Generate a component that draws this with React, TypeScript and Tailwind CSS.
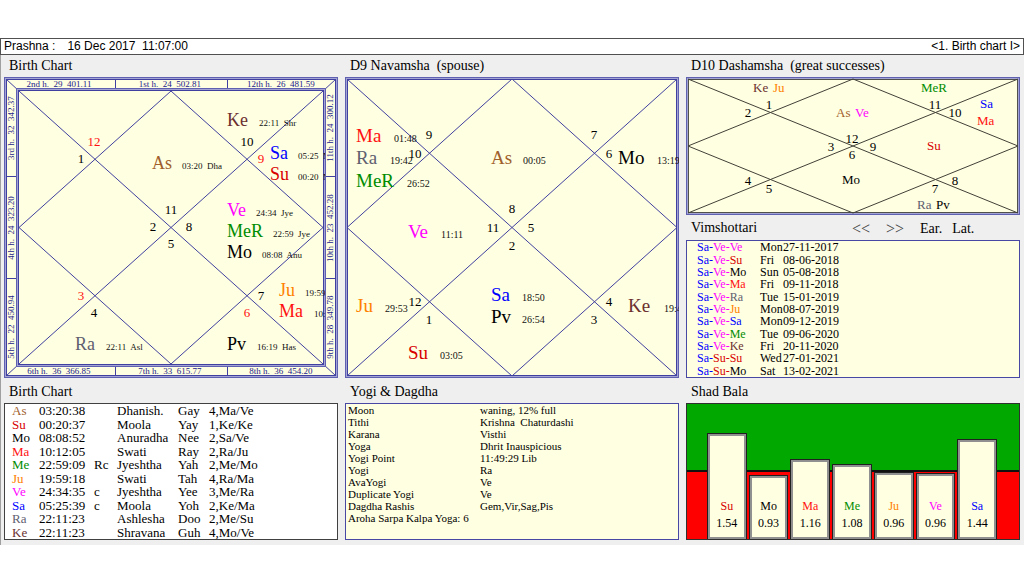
import type { ReactNode } from "react";

const SERIF = "font-['Liberation_Serif',serif]";

const COLORS: Record<string, string> = {
  As: "#a0602c",
  Su: "#d80000",
  Mo: "#000000",
  Ma: "#ff1010",
  Me: "#008c00",
  MeR: "#008c00",
  Ju: "#ff8000",
  Ve: "#ff00ff",
  Sa: "#0000ff",
  Ra: "#606070",
  Ke: "#6b3030",
  Pv: "#000000",
};

const NAVY = "#4040a0";
const CREAM = "#ffffe1";

type Label = { x: number; y: number; t: string; c?: string };
type Body = { x: number; y: number; p: string; dx?: number; note?: string };

function Numbers({ items }: { items: Label[] }) {
  return (
    <g fontSize={13} textAnchor="middle">
      {items.map((n) => (
        <text key={n.t} x={n.x} y={n.y} fill={n.c ?? "#000"}>
          {n.t}
        </text>
      ))}
    </g>
  );
}

function Bodies({ items, size, noteSize }: { items: Body[]; size: number; noteSize: number }) {
  return (
    <g>
      {items.map((b) => (
        <g key={b.p}>
          <text x={b.x} y={b.y} fontSize={size} fill={COLORS[b.p]}>
            {b.p}
          </text>
          {b.note && (
            <text x={b.dx} y={b.y} fontSize={noteSize} fill="#111" className="whitespace-pre">
              {b.note}
            </text>
          )}
        </g>
      ))}
    </g>
  );
}

function Lattice({ x, y, w, h, color }: { x: number; y: number; w: number; h: number; color: string }) {
  const mx = x + w / 2;
  const my = y + h / 2;
  return (
    <path
      d={`M${x} ${y}L${x + w} ${y + h}M${x + w} ${y}L${x} ${y + h}M${mx} ${y}L${x + w} ${my}L${mx} ${y + h}L${x} ${my}Z`}
      fill="none"
      stroke={color}
      strokeWidth={1}
    />
  );
}

function Frame({ x, y, w, h, inner = NAVY }: { x: number; y: number; w: number; h: number; inner?: string }) {
  return (
    <g fill="none">
      <rect x={x + 1} y={y + 1} width={w - 2} height={h - 2} stroke="#a4a4d4" strokeWidth={2} />
      <rect x={x + 0.5} y={y + 0.5} width={w - 1} height={h - 1} stroke="#6060b0" />
      <rect x={x + 2.5} y={y + 2.5} width={w - 5} height={h - 5} stroke={inner} />
    </g>
  );
}

const BIRTH_NUMBERS: Label[] = [
  { x: 90, y: 69, t: "12", c: "#ff1010" },
  { x: 77, y: 86, t: "1" },
  { x: 243, y: 69, t: "10" },
  { x: 257, y: 86, t: "9", c: "#ff1010" },
  { x: 167, y: 137, t: "11" },
  { x: 149, y: 154, t: "2" },
  { x: 185, y: 154, t: "8" },
  { x: 167, y: 171, t: "5" },
  { x: 77, y: 223, t: "3", c: "#ff1010" },
  { x: 90, y: 240, t: "4" },
  { x: 257, y: 223, t: "7" },
  { x: 243, y: 240, t: "6", c: "#ff1010" },
];

const BIRTH_BODIES: Body[] = [
  { x: 223, y: 49, p: "Ke", dx: 255, note: "22:11  Shr" },
  { x: 148, y: 92, p: "As", dx: 178, note: "03:20  Dha" },
  { x: 266, y: 82, p: "Sa", dx: 294, note: "05:25  M" },
  { x: 266, y: 103, p: "Su", dx: 294, note: "00:20  M" },
  { x: 223, y: 139, p: "Ve", dx: 252, note: "24:34  Jye" },
  { x: 223, y: 160, p: "MeR", dx: 269, note: "22:59  Jye" },
  { x: 223, y: 181, p: "Mo", dx: 258, note: "08:08  Anu" },
  { x: 275, y: 219, p: "Ju", dx: 301, note: "19:59" },
  { x: 275, y: 240, p: "Ma", dx: 310, note: "10:" },
  { x: 71, y: 273, p: "Ra", dx: 102, note: "22:11  Asl" },
  { x: 223, y: 273, p: "Pv", dx: 253, note: "16:19  Has" },
];

const HOUSES: { x: number; y: number; t: string; r?: boolean }[] = [
  { x: 55, y: 10, t: "2nd h.  29  401.11" },
  { x: 166, y: 10, t: "1st h.  24  502.81" },
  { x: 277, y: 10, t: "12th h.  26  481.59" },
  { x: 55, y: 297, t: "6th h.  36  366.85" },
  { x: 166, y: 297, t: "7th h.  33  615.77" },
  { x: 277, y: 297, t: "8th h.  36  454.20" },
  { x: 10, y: 51, t: "3rd h.  32  342.37", r: true },
  { x: 10, y: 151, t: "4th h.  24  323.20", r: true },
  { x: 10, y: 250, t: "5th h.  22  450.94", r: true },
  { x: 329, y: 51, t: "11th h.  24  300.12", r: true },
  { x: 329, y: 151, t: "10th h.  23  452.28", r: true },
  { x: 329, y: 250, t: "9th h.  28  349.78", r: true },
];

function BirthChart() {
  return (
    <svg viewBox="0 0 334 301" className="block h-auto w-full" role="img" aria-label="Birth Chart">
      <defs>
        <clipPath id="birth-inner">
          <rect x="14" y="13" width="307" height="275" />
        </clipPath>
      </defs>
      <rect width="334" height="301" fill={CREAM} />
      <path d="M2 2L15 14M332 2L319 14M2 299L15 287M332 299L319 287" stroke={NAVY} fill="none" />
      <path
        d="M111.5 2V13M223.5 2V13M111.5 288V299M223.5 288V299M2 99.5H13M2 201.5H13M321 99.5H332M321 201.5H332"
        stroke={NAVY}
        fill="none"
      />
      <Frame x={0} y={0} w={334} h={301} />
      <Frame x={12} y={11} w={310} h={279} />
      <Lattice x={15} y={14} w={304} h={273} color={NAVY} />
      <g fontSize={9} textAnchor="middle" fill="#22228c">
        {HOUSES.map((h) => (
          <text
            key={h.t}
            x={h.x}
            y={h.y}
            className="whitespace-pre"
            transform={h.r ? `rotate(-90 ${h.x} ${h.y})` : undefined}
          >
            {h.t}
          </text>
        ))}
      </g>
      <Numbers items={BIRTH_NUMBERS} />
      <g clipPath="url(#birth-inner)">
        <Bodies items={BIRTH_BODIES} size={18} noteSize={9} />
      </g>
    </svg>
  );
}

const NAVAMSHA_NUMBERS: Label[] = [
  { x: 84, y: 62, t: "9" },
  { x: 70, y: 81, t: "10" },
  { x: 249, y: 62, t: "7" },
  { x: 264, y: 81, t: "6" },
  { x: 167, y: 136, t: "8" },
  { x: 148, y: 155, t: "11" },
  { x: 186, y: 155, t: "5" },
  { x: 167, y: 173, t: "2" },
  { x: 70, y: 229, t: "12" },
  { x: 84, y: 247, t: "1" },
  { x: 264, y: 229, t: "4" },
  { x: 249, y: 247, t: "3" },
];

const NAVAMSHA_BODIES: Body[] = [
  { x: 11, y: 65, p: "Ma", dx: 49, note: "01:48" },
  { x: 11, y: 87, p: "Ra", dx: 45, note: "19:42" },
  { x: 11, y: 110, p: "MeR", dx: 62, note: "26:52" },
  { x: 146, y: 87, p: "As", dx: 178, note: "00:05" },
  { x: 273, y: 87, p: "Mo", dx: 312, note: "13:19" },
  { x: 63, y: 161, p: "Ve", dx: 96, note: "11:11" },
  { x: 146, y: 224, p: "Sa", dx: 177, note: "18:50" },
  { x: 146, y: 246, p: "Pv", dx: 177, note: "26:54" },
  { x: 11, y: 235, p: "Ju", dx: 40, note: "29:53" },
  { x: 283, y: 235, p: "Ke", dx: 319, note: "19:4" },
  { x: 63, y: 282, p: "Su", dx: 95, note: "03:05" },
];

function NavamshaChart() {
  return (
    <svg viewBox="0 0 334 301" className="block h-auto w-full" role="img" aria-label="D9 Navamsha">
      <rect width="334" height="301" fill={CREAM} />
      <Frame x={0} y={0} w={334} h={301} />
      <Lattice x={2} y={2} w={330} h={297} color={NAVY} />
      <Numbers items={NAVAMSHA_NUMBERS} />
      <Bodies items={NAVAMSHA_BODIES} size={19} noteSize={10} />
    </svg>
  );
}

const DASHAMSHA_NUMBERS: Label[] = [
  { x: 83, y: 32, t: "1" },
  { x: 62, y: 40, t: "2" },
  { x: 249, y: 32, t: "11" },
  { x: 269, y: 40, t: "10" },
  { x: 166, y: 66, t: "12" },
  { x: 145, y: 74, t: "3" },
  { x: 187, y: 74, t: "9" },
  { x: 166, y: 82, t: "6" },
  { x: 62, y: 108, t: "4" },
  { x: 83, y: 116, t: "5" },
  { x: 269, y: 108, t: "8" },
  { x: 249, y: 116, t: "7" },
];

const DASHAMSHA_BODIES: Body[] = [
  { x: 67, y: 15, p: "Ke" },
  { x: 87, y: 15, p: "Ju" },
  { x: 150, y: 40, p: "As" },
  { x: 169, y: 40, p: "Ve" },
  { x: 235, y: 15, p: "MeR" },
  { x: 294, y: 31, p: "Sa" },
  { x: 291, y: 48, p: "Ma" },
  { x: 241, y: 73, p: "Su" },
  { x: 156, y: 107, p: "Mo" },
  { x: 231, y: 132, p: "Ra" },
  { x: 250, y: 132, p: "Pv" },
];

function DashamshaChart() {
  return (
    <svg viewBox="0 0 334 138" className="block h-auto w-full" role="img" aria-label="D10 Dashamsha">
      <rect width="334" height="138" fill={CREAM} />
      <Frame x={0} y={0} w={334} h={138} inner="#50504c" />
      <Lattice x={2} y={2} w={330} h={134} color="#404038" />
      <Numbers items={DASHAMSHA_NUMBERS} />
      <Bodies items={DASHAMSHA_BODIES} size={13} noteSize={9} />
    </svg>
  );
}

function Planet({ name, tail }: { name: string; tail?: string }) {
  return (
    <span style={{ color: COLORS[name] }}>
      {name}
      {tail}
    </span>
  );
}

function Title({ children }: { children: ReactNode }) {
  return <h2 className="whitespace-pre pl-[5px] text-[14px] leading-[22px]">{children}</h2>;
}

const DASHAS = [
  ["Sa", "Ve", "Ve", "Mon", "27-11-2017"],
  ["Sa", "Ve", "Su", "Fri", "08-06-2018"],
  ["Sa", "Ve", "Mo", "Sun", "05-08-2018"],
  ["Sa", "Ve", "Ma", "Fri", "09-11-2018"],
  ["Sa", "Ve", "Ra", "Tue", "15-01-2019"],
  ["Sa", "Ve", "Ju", "Mon", "08-07-2019"],
  ["Sa", "Ve", "Sa", "Mon", "09-12-2019"],
  ["Sa", "Ve", "Me", "Tue", "09-06-2020"],
  ["Sa", "Ve", "Ke", "Fri", "20-11-2020"],
  ["Sa", "Su", "Su", "Wed", "27-01-2021"],
  ["Sa", "Su", "Mo", "Sat", "13-02-2021"],
];

function Vimshottari() {
  return (
    <section>
      <div className="flex h-[25px] items-end text-[14px] leading-[22px]">
        <h2 className="w-[166px] pb-px pl-[5px]">Vimshottari</h2>
        <div className="flex gap-4">
          <button type="button" className="w-[18px] text-left text-[16px] text-[#444]" aria-label="Previous">&lt;&lt;</button>
          <button type="button" className="w-[18px] text-left text-[16px] text-[#444]" aria-label="Next">&gt;&gt;</button>
          <div className="flex gap-[10px]">
            <button type="button">Ear.</button>
            <button type="button">Lat.</button>
          </div>
        </div>
      </div>
      <div className="border border-[#4848a4] bg-[#ffffe1] pl-[10px]">
        <table className="h-[136px] text-[12px] leading-[12px]">
          <tbody>
            {DASHAS.map(([a, b, c, day, date]) => (
              <tr key={date}>
                <td className="w-[63px] p-0">
                  <Planet name={a} tail="-" />
                  <Planet name={b} tail="-" />
                  <Planet name={c} />
                </td>
                <td className="w-[23px] max-w-[23px] p-0">{day}</td>
                <td className="p-0">{date}</td>
              </tr>
            ))}
          </tbody>
        </table>
      </div>
    </section>
  );
}

const POSITIONS = [
  ["As", "03:20:38", "", "Dhanish.", "Gay", "4,Ma/Ve"],
  ["Su", "00:20:37", "", "Moola", "Yay", "1,Ke/Ke"],
  ["Mo", "08:08:52", "", "Anuradha", "Nee", "2,Sa/Ve"],
  ["Ma", "10:12:05", "", "Swati", "Ray", "2,Ra/Ju"],
  ["Me", "22:59:09", "Rc", "Jyeshtha", "Yah", "2,Me/Mo"],
  ["Ju", "19:59:18", "", "Swati", "Tah", "4,Ra/Ma"],
  ["Ve", "24:34:35", "c", "Jyeshtha", "Yee", "3,Me/Ra"],
  ["Sa", "05:25:39", "c", "Moola", "Yoh", "2,Ke/Ma"],
  ["Ra", "22:11:23", "", "Ashlesha", "Doo", "2,Me/Su"],
  ["Ke", "22:11:23", "", "Shravana", "Guh", "4,Mo/Ve"],
];

function Positions() {
  return (
    <section>
      <Title>Birth Chart</Title>
      <div className="border border-[#404040] bg-white pl-[7px]">
        <table className="h-[135px] text-[13px] leading-[13px]">
          <tbody>
            {POSITIONS.map(([p, deg, flag, star, syl, lords]) => (
              <tr key={p}>
                <td className="w-[27px] p-0">
                  <Planet name={p} />
                </td>
                <td className="w-[55px] p-0">{deg}</td>
                <td className="w-[23px] p-0">{flag}</td>
                <td className="w-[61px] p-0">{star}</td>
                <td className="w-[31px] p-0">{syl}</td>
                <td className="p-0">{lords}</td>
              </tr>
            ))}
          </tbody>
        </table>
      </div>
    </section>
  );
}

const YOGI = [
  ["Moon", "waning, 12% full"],
  ["Tithi", "Krishna  Chaturdashi"],
  ["Karana", "Visthi"],
  ["Yoga", "Dhrit Inauspicious"],
  ["Yogi Point", "11:49:29 Lib"],
  ["Yogi", "Ra"],
  ["AvaYogi", "Ve"],
  ["Duplicate Yogi", "Ve"],
  ["Dagdha Rashis", "Gem,Vir,Sag,Pis"],
  ["Aroha Sarpa Kalpa Yoga: 6", ""],
];

function Yogi() {
  return (
    <section>
      <Title>Yogi &amp; Dagdha</Title>
      <div className="h-[137px] border border-[#4848a4] bg-[#ffffe1] pl-[2px]">
        <table className="text-[11px] leading-[12px]">
          <tbody>
            {YOGI.map(([k, v]) => (
              <tr key={k}>
                <td className="w-[132px] whitespace-pre p-0">{k}</td>
                <td className="whitespace-pre p-0">{v}</td>
              </tr>
            ))}
          </tbody>
        </table>
      </div>
    </section>
  );
}

const BALA = [
  { p: "Su", v: "1.54", h: 106 },
  { p: "Mo", v: "0.93", h: 64 },
  { p: "Ma", v: "1.16", h: 80 },
  { p: "Me", v: "1.08", h: 75 },
  { p: "Ju", v: "0.96", h: 67 },
  { p: "Ve", v: "0.96", h: 66 },
  { p: "Sa", v: "1.44", h: 100 },
];

function ShadBala() {
  return (
    <section>
      <Title>Shad Bala</Title>
      <div className="h-[137px] border border-[#303030] bg-[linear-gradient(#00a800_66px,#101010_66px,#101010_68px,#ff0000_68px)]">
        <div className="flex h-full items-end gap-[2px] pl-5 pr-[22px]">
          {BALA.map((b) => (
            <div
              key={b.p}
              className="flex flex-1 flex-col justify-end border border-b-0 border-[#202020] bg-[#ffffe1] pb-[7px] text-center text-[12px] leading-[17px] shadow-[inset_0_0_0_2px_#909090]"
              style={{ height: b.h }}
            >
              <Planet name={b.p} />
              <span>{b.v}</span>
            </div>
          ))}
        </div>
      </div>
    </section>
  );
}

export default function App() {
  return (
    <div className={`min-h-screen bg-white pt-[38px] text-black ${SERIF}`}>
      <header className="flex h-[17px] items-center justify-between border border-[#505050] bg-white px-[3px] font-['Liberation_Sans',sans-serif] text-[12px] leading-[15px]">
        <div className="flex gap-3 whitespace-pre">
          <span>Prashna :</span>
          <span>16 Dec 2017  11:07:00</span>
        </div>
        <button type="button">&lt;1. Birth chart I&gt;</button>
      </header>
      <main className="grid grid-cols-3 gap-x-[7px] gap-y-[3px] border-l border-[#a0a0a0] bg-[#efefef] pb-[5px] pl-[3px] pr-1">
        <section>
          <Title>Birth Chart</Title>
          <BirthChart />
        </section>
        <section>
          <Title>D9 Navamsha  (spouse)</Title>
          <NavamshaChart />
        </section>
        <div>
          <section>
            <Title>D10 Dashamsha  (great successes)</Title>
            <DashamshaChart />
          </section>
          <Vimshottari />
        </div>
        <Positions />
        <Yogi />
        <ShadBala />
      </main>
    </div>
  );
}
